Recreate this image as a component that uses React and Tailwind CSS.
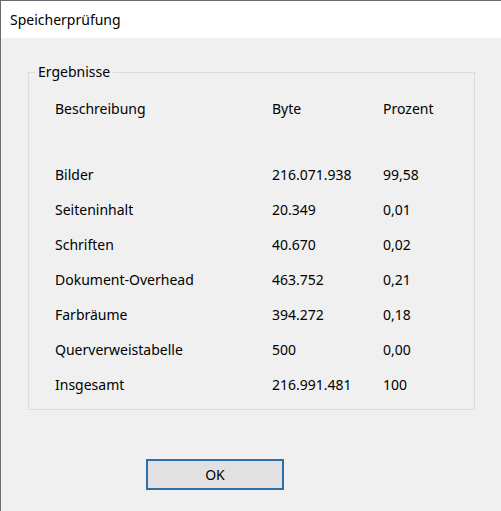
import React from 'react';

const rows = [
  { name: 'Bilder', bytes: '216.071.938', pct: '99,58' },
  { name: 'Seiteninhalt', bytes: '20.349', pct: '0,01' },
  { name: 'Schriften', bytes: '40.670', pct: '0,02' },
  { name: 'Dokument-Overhead', bytes: '463.752', pct: '0,21' },
  { name: 'Farbräume', bytes: '394.272', pct: '0,18' },
  { name: 'Querverweistabelle', bytes: '500', pct: '0,00' },
  { name: 'Insgesamt', bytes: '216.991.481', pct: '100' },
];

export default function App() {
  return (
    <div
      className="flex h-[511px] w-[501px] flex-col border-l border-t border-[#6b6b6b] bg-[#f0f0f0] text-[14px] text-black"
      style={{ fontFamily: '"Noto Sans", "Open Sans", sans-serif' }}
    >
      <div className="flex h-[37px] items-center bg-white pl-[9px] text-[14px]">
        Speicherprüfung
      </div>

      <div className="relative ml-[27px] mt-[34px] h-[338px] w-[447px] border border-[#dcdcdc]">
        <span className="absolute -top-[11px] left-[6px] bg-[#f0f0f0] px-[3px] leading-[20px]">
          Ergebnisse
        </span>

        <div className="grid grid-cols-[217px_111px_1fr] pl-[26px] pt-[26px]">
          <div className="leading-[20px]">Beschreibung</div>
          <div className="leading-[20px]">Byte</div>
          <div className="leading-[20px]">Prozent</div>
        </div>

        <div className="mt-[46px] flex flex-col gap-[15px] pl-[26px]">
          {rows.map((r) => (
            <div key={r.name} className="grid grid-cols-[217px_111px_1fr] leading-[20px]">
              <div>{r.name}</div>
              <div>{r.bytes}</div>
              <div>{r.pct}</div>
            </div>
          ))}
        </div>
      </div>

      <div className="ml-[145px] mt-[49px]">
        <button
          type="button"
          className="flex h-[31px] w-[138px] items-center justify-center border-2 border-[#2a6fa8] bg-[#e1e1e1] text-[14px]"
        >
          OK
        </button>
      </div>
    </div>
  );
}
